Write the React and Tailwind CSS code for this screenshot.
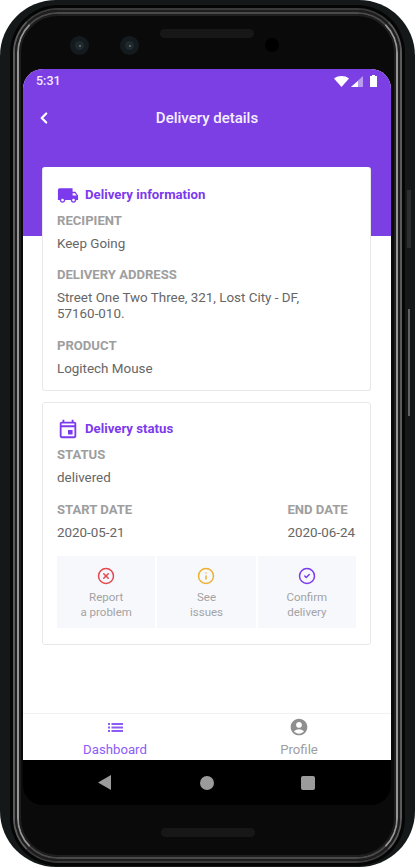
import React from "react";
import { MdLocalShipping, MdOutlineEvent, MdAccountCircle } from "react-icons/md";
import { ChevronLeft, CircleX, Info, CircleCheck } from "lucide-react";

const Label = ({ children, className = "" }) => (
  <div className={"text-[13.1px] leading-[16px] font-bold text-[#9e9e9e] " + className}>{children}</div>
);
const Value = ({ children, className = "" }) => (
  <div className={"text-[13.4px] leading-[16px] text-[#666666] " + className}>{children}</div>
);

const Tile = ({ icon, a, b }) => (
  <div className="flex-1 h-[72px] bg-[#f7f8fc] flex flex-col items-center pt-[11px]">
    {icon}
    <div className="mt-[5px] text-[11.5px] leading-[15px] text-[#a3a3a3] text-center">
      {a}
      <br />
      {b}
    </div>
  </div>
);

const CardTitle = ({ icon, children }) => (
  <div className="flex items-center h-[24px] gap-[6px]">
    <div className="w-[22px] flex justify-center">{icon}</div>
    <div className="text-[13.2px] font-bold text-[#7c3aed]">{children}</div>
  </div>
);

const Camera = () => (
  <div className="w-[19px] h-[19px] rounded-full bg-[#141b1f] flex items-center justify-center">
    <div className="w-[9px] h-[9px] rounded-full bg-[#20292e] flex items-center justify-center">
      <div className="w-[2px] h-[2px] rounded-full bg-[#6a747a]" />
    </div>
  </div>
);

export default function App() {
  return (
    <div className="w-[415px] h-[867px] bg-white overflow-hidden relative" style={{ fontFamily: "Roboto, sans-serif" }}>
      <div className="w-full h-full rounded-[56px] bg-[#141818] px-[10px] pt-[5px] pb-[1px]">
        <div className="w-full h-full rounded-[48px] bg-[#050505] p-[3px]">
          <div className="w-full h-full rounded-[45px] border-2 border-x-[#5a5a5a] border-y-[#3a3a3a]">
            <div className="w-full h-full rounded-[43px] border-2 border-[#1e1e1e]">
              <div className="w-full h-full rounded-[41px] border-2 border-x-[#959595] border-y-[#4a4a4a]">
                <div className="w-full h-full rounded-[39px] border-2 border-[#1e1e1e] bg-[#0a0a0a] px-[2px] flex flex-col">
                  <div className="h-[53px] relative shrink-0">
                    <div className="absolute left-[47px] top-[20px]"><Camera /></div>
                    <div className="absolute left-[97px] top-[20px]"><Camera /></div>
                    <div className="absolute left-[137px] top-[13px] w-[94px] h-[9px] rounded-full bg-[#171717]" />
                    <div className="absolute left-[242px] top-[22px] w-[14px] h-[14px] rounded-full bg-black" />
                  </div>
                  <div className="w-[368px] h-[736px] shrink-0 rounded-[20px] overflow-hidden bg-black flex flex-col">
                    <div className="h-[691px] bg-white flex flex-col shrink-0">
                      <div className="h-[167px] bg-[#7c3fe4] shrink-0 text-white">
                        <div className="h-[24px] pl-[13px] pr-[14px] flex items-center justify-between">
                          <span className="text-[12.5px] font-medium text-[#f3ecff]">5:31</span>
                          <div className="flex items-center">
                            <svg width="15" height="11" viewBox="0 0 15 11">
                              <path d="M0 2.5C4-.8 11-.8 15 2.5L7.5 11z" fill="#fff" />
                            </svg>
                            <svg width="12" height="11" viewBox="0 0 12 11" className="ml-[2px]">
                              <path d="M12 0V11H0z" fill="#b99bf0" />
                              <path d="M7 5V11H0z" fill="#fff" />
                            </svg>
                            <svg width="7" height="12" viewBox="0 0 7 12" className="ml-[7px]">
                              <path d="M2 0H5V1H7V12H0V1H2z" fill="#fff" />
                            </svg>
                          </div>
                        </div>
                        <div className="relative h-[50px] pt-[1px] flex items-center justify-center">
                          <ChevronLeft className="absolute left-[12px] top-[16px]" size={18} strokeWidth={3} color="#fff" />
                          <span className="text-[15px] font-medium text-[#f5f0ff]">Delivery details</span>
                        </div>
                      </div>
                      <div className="mt-[-69px] pl-[19px] pr-[20px] flex flex-col gap-[11px] flex-1">
                        <div className="h-[224px] bg-white rounded-[3px] border border-[#e8e8e8] border-t-0 pt-[16px] px-[14px]">
                          <CardTitle icon={<MdLocalShipping size={25} color="#7c3aed" />}>Delivery information</CardTitle>
                          <Label className="mt-[6px]">RECIPIENT</Label>
                          <Value className="mt-[7px]">Keep Going</Value>
                          <Label className="mt-[15px]">DELIVERY ADDRESS</Label>
                          <Value className="mt-[7px]">
                            Street One Two Three, 321, Lost City - DF,
                            <br />
                            57160-010.
                          </Value>
                          <Label className="mt-[16px]">PRODUCT</Label>
                          <Value className="mt-[7px]">Logitech Mouse</Value>
                        </div>
                        <div className="h-[243px] bg-white rounded-[3px] border border-[#e8e8e8] pt-[14px] px-[14px]">
                          <CardTitle icon={<MdOutlineEvent size={24} color="#7c3aed" />}>Delivery status</CardTitle>
                          <Label className="mt-[6px]">STATUS</Label>
                          <Value className="mt-[7px]">delivered</Value>
                          <div className="mt-[16px] flex justify-between pr-[1px]">
                            <div>
                              <Label>START DATE</Label>
                              <Value className="mt-[7px]">2020-05-21</Value>
                            </div>
                            <div>
                              <Label>END DATE</Label>
                              <Value className="mt-[7px]">2020-06-24</Value>
                            </div>
                          </div>
                          <div className="mt-[15px] flex gap-[2px]">
                            <Tile icon={<CircleX size={18} color="#e5484d" strokeWidth={2} />} a="Report" b="a problem" />
                            <Tile icon={<Info size={18} color="#ecb22e" strokeWidth={2} />} a="See" b="issues" />
                            <Tile icon={<CircleCheck size={18} color="#7c3aed" strokeWidth={2} />} a="Confirm" b="delivery" />
                          </div>
                        </div>
                      </div>
                      <div className="h-[47px] shrink-0 border-t border-[#f1f1f1] flex">
                        <div className="flex-1 flex flex-col items-center pt-[9px]">
                          <svg width="15" height="9" viewBox="0 0 15 9" fill="#8b5cf6">
                            <rect x="0" y="0" width="2" height="2" />
                            <rect x="0" y="3.5" width="2" height="2" />
                            <rect x="0" y="7" width="2" height="2" />
                            <rect x="3.5" y="0" width="11.5" height="2" />
                            <rect x="3.5" y="3.5" width="11.5" height="2" />
                            <rect x="3.5" y="7" width="11.5" height="2" />
                          </svg>
                          <span className="mt-[9px] text-[13.2px] leading-[18px] text-[#8b5cf6]">Dashboard</span>
                        </div>
                        <div className="flex-1 flex flex-col items-center pt-[3px]">
                          <MdAccountCircle size={20} color="#8f8f8f" />
                          <span className="mt-[4px] text-[13.2px] leading-[18px] text-[#9e9e9e]">Profile</span>
                        </div>
                      </div>
                    </div>
                    <div className="flex-1 flex items-center justify-center gap-[87px] pr-[2px]">
                      <svg width="13" height="15" viewBox="0 0 13 15" className="mr-[2px]">
                        <path d="M13 0V15L0 7.5z" fill="#9b9b9b" />
                      </svg>
                      <div className="w-[14px] h-[14px] rounded-full bg-[#9b9b9b]" />
                      <div className="w-[14px] h-[14px] rounded-[2px] bg-[#9b9b9b]" />
                    </div>
                  </div>
                  <div className="flex-1 flex items-center justify-center pt-[4px]">
                    <div className="w-[94px] h-[9px] rounded-full bg-[#171717]" />
                  </div>
                </div>
              </div>
            </div>
          </div>
        </div>
      </div>
      <div className="absolute left-[407px] top-[190px] w-[4px] h-[58px] bg-[#2c2f2f]" />
      <div className="absolute left-[408px] top-[309px] w-[2px] h-[107px] bg-[#5f6363]" />
    </div>
  );
}
